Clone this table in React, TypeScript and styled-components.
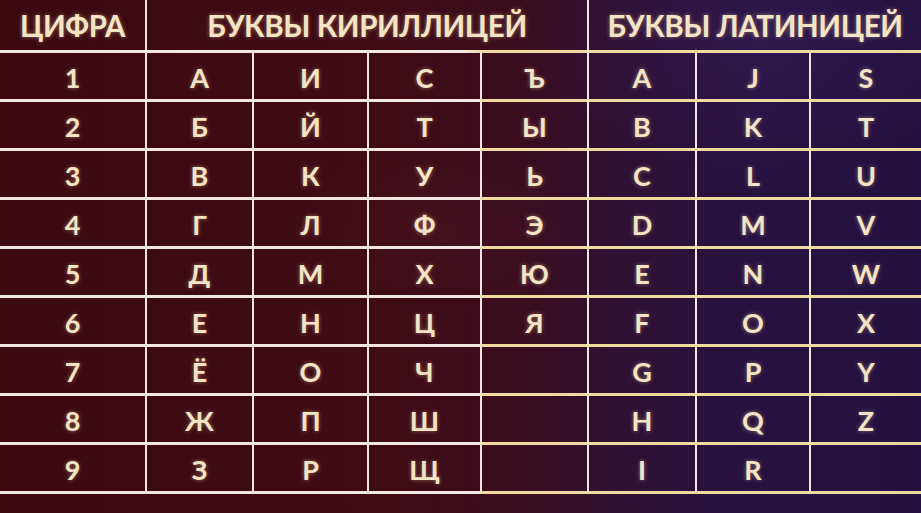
import styled, { createGlobalStyle } from 'styled-components';

const GlobalStyle = createGlobalStyle`
  html, body {
    margin: 0;
    padding: 0;
    background: #2c0d26;
  }
`;

const Page = styled.div`
  width: 921px;
  height: 513px;
  overflow: hidden;
  font-family: Lato, "Liberation Sans", sans-serif;
  background:
    radial-gradient(ellipse 200px 120px at 440px 230px, rgba(110, 50, 70, 0.14), transparent 70%),
    radial-gradient(ellipse 300px 200px at 760px 40px, rgba(70, 40, 110, 0.3), transparent 70%),
    linear-gradient(90deg, #3c0911 0%, #3f0b16 42%, #3b0c1d 56%, #2f1032 66%, #271140 82%, #241040 100%);
`;

const Table = styled.div`
  display: grid;
  grid-template-columns: 145px 107px 115px 113px 107px 108px 114px 112px;
  grid-template-rows: 53px;
  grid-auto-rows: 49px;
`;

const HeadCell = styled.div<{ $span: number; $rule: string; $first?: boolean }>`
  grid-column: span ${p => p.$span};
  display: flex;
  align-items: center;
  justify-content: center;
  padding-bottom: 2px;
  box-sizing: border-box;
  border-left: ${p => (p.$first ? 'none' : '2px solid #f1e6dc')};
  background: ${p => p.$rule} bottom / 100% 3px no-repeat;
  color: #f4e4c6;
  font-size: 29.5px;
  font-weight: 700;
  letter-spacing: -0.4px;
  text-shadow: 0 0 4px rgba(255, 220, 160, 0.45);
`;

const Cell = styled.div<{ $col: number }>`
  display: flex;
  align-items: center;
  justify-content: center;
  padding-top: 3px;
  box-sizing: border-box;
  border-left: ${p => (p.$col === 0 ? 'none' : '2px solid #f1e7e0')};
  border-bottom: 3px solid ${p => (p.$col >= 4 ? '#efdba0' : '#f2e6e2')};
  color: #f4e4c6;
  font-size: 27px;
  font-weight: 700;
  text-shadow: 0 0 4px rgba(255, 220, 160, 0.45);
`;

const WHITE = 'linear-gradient(#f3e8e4, #f3e8e4)';
const MIXED = 'linear-gradient(90deg, #f3e8e4 0%, #f3e8e4 72%, #efdba0 76%, #efdba0 100%)';
const GOLD = 'linear-gradient(#efdba0, #efdba0)';

const rows: string[][] = [
  ['1', 'А', 'И', 'С', 'Ъ', 'A', 'J', 'S'],
  ['2', 'Б', 'Й', 'Т', 'Ы', 'B', 'K', 'T'],
  ['3', 'В', 'К', 'У', 'Ь', 'C', 'L', 'U'],
  ['4', 'Г', 'Л', 'Ф', 'Э', 'D', 'M', 'V'],
  ['5', 'Д', 'М', 'Х', 'Ю', 'E', 'N', 'W'],
  ['6', 'Е', 'Н', 'Ц', 'Я', 'F', 'O', 'X'],
  ['7', 'Ё', 'О', 'Ч', '', 'G', 'P', 'Y'],
  ['8', 'Ж', 'П', 'Ш', '', 'H', 'Q', 'Z'],
  ['9', 'З', 'Р', 'Щ', '', 'I', 'R', ''],
];

export default function App() {
  return (
    <>
      <GlobalStyle />
      <Page>
        <Table>
          <HeadCell $span={1} $rule={WHITE} $first>ЦИФРА</HeadCell>
          <HeadCell $span={4} $rule={MIXED}>БУКВЫ КИРИЛЛИЦЕЙ</HeadCell>
          <HeadCell $span={3} $rule={GOLD}>БУКВЫ ЛАТИНИЦЕЙ</HeadCell>
          {rows.map((row, r) =>
            row.map((ch, c) => (
              <Cell key={`${r}-${c}`} $col={c}>
                {ch}
              </Cell>
            ))
          )}
        </Table>
      </Page>
    </>
  );
}
